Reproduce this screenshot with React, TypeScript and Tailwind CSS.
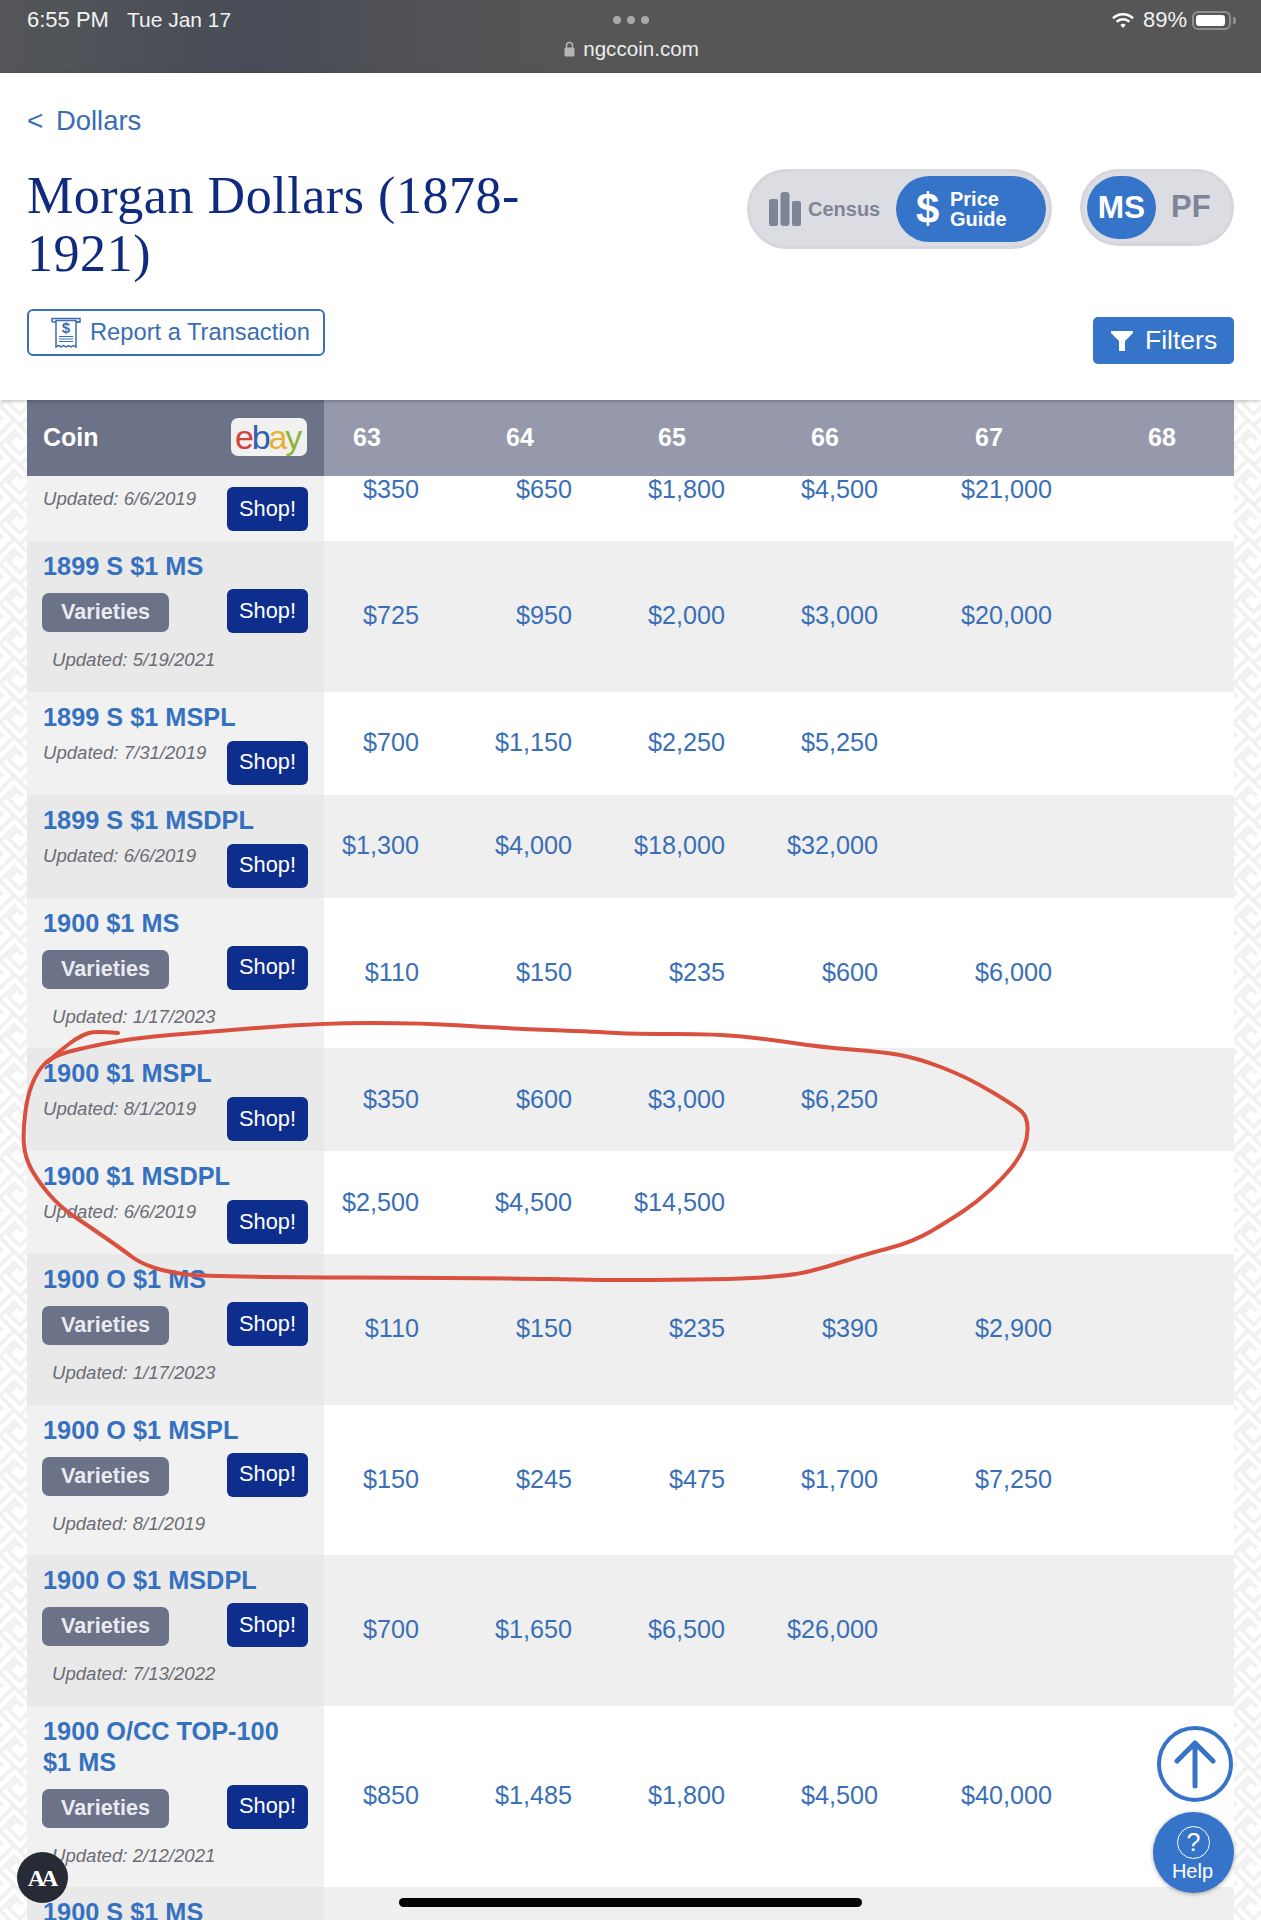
import React from "react";

type Row = {
  title: React.ReactNode;
  updated?: string;
  varieties?: boolean;
  prices: string[];
};

const rows: Row[] = [
  { title: "", updated: "6/6/2019", prices: ["$350", "$650", "$1,800", "$4,500", "$21,000"] },
  { title: "1899 S $1 MS", updated: "5/19/2021", varieties: true, prices: ["$725", "$950", "$2,000", "$3,000", "$20,000"] },
  { title: "1899 S $1 MSPL", updated: "7/31/2019", prices: ["$700", "$1,150", "$2,250", "$5,250"] },
  { title: "1899 S $1 MSDPL", updated: "6/6/2019", prices: ["$1,300", "$4,000", "$18,000", "$32,000"] },
  { title: "1900 $1 MS", updated: "1/17/2023", varieties: true, prices: ["$110", "$150", "$235", "$600", "$6,000"] },
  { title: "1900 $1 MSPL", updated: "8/1/2019", prices: ["$350", "$600", "$3,000", "$6,250"] },
  { title: "1900 $1 MSDPL", updated: "6/6/2019", prices: ["$2,500", "$4,500", "$14,500"] },
  { title: "1900 O $1 MS", updated: "1/17/2023", varieties: true, prices: ["$110", "$150", "$235", "$390", "$2,900"] },
  { title: "1900 O $1 MSPL", updated: "8/1/2019", varieties: true, prices: ["$150", "$245", "$475", "$1,700", "$7,250"] },
  { title: "1900 O $1 MSDPL", updated: "7/13/2022", varieties: true, prices: ["$700", "$1,650", "$6,500", "$26,000"] },
  { title: <>1900 O/CC TOP-100<br />$1 MS</>, updated: "2/12/2021", varieties: true, prices: ["$850", "$1,485", "$1,800", "$4,500", "$40,000"] },
  { title: "1900 S $1 MS", prices: [] },
];

const gridCols = "grid grid-cols-[297px_153px_153px_153px_153px_174px_124px]";

function Shop() {
  return (
    <div className="w-[81px] h-[44px] shrink-0 flex items-center justify-center rounded-[6px] bg-[#0e2e8e] text-white text-[21.8px]">
      Shop!
    </div>
  );
}

function CoinCell({ row, odd }: { row: Row; odd: boolean }) {
  return (
    <div className={`pr-[16px] pt-[10px] ${odd ? "bg-[#e9e9e9]" : "bg-[#f1f1f1]"}`}>
      <div className="pl-[16px] min-h-[31px] text-[25.3px] leading-[31px] font-bold text-[#3571bf]">{row.title}</div>
      {row.updated === undefined ? null : row.varieties ? (
        <>
          <div className="flex justify-between items-start mt-[7px] pl-[15px]">
            <div className="mt-[4px] w-[127px] h-[39px] flex items-center justify-center rounded-[7px] bg-[#6c7288] text-[#e9ebf1] font-bold text-[21.6px]">
              Varieties
            </div>
            <Shop />
          </div>
          <div className="mt-[16px] pl-[25px] pb-[20.5px] leading-[22px] text-[18.6px] italic text-[#6a6d75]">
            Updated: {row.updated}
          </div>
        </>
      ) : (
        <div className="flex justify-between items-start pl-[16px] pb-[10px]">
          <div className="mt-[9px] leading-[22px] text-[18.6px] italic text-[#6a6d75]">Updated: {row.updated}</div>
          <div className="mt-[8px]">
            <Shop />
          </div>
        </div>
      )}
    </div>
  );
}

function TableRow({ row, odd }: { row: Row; odd: boolean }) {
  const cells = [0, 1, 2, 3, 4];
  return (
    <div className={`${gridCols} ${odd ? "bg-[#efefef]" : "bg-white"}`}>
      <CoinCell row={row} odd={odd} />
      {cells.map((i) => (
        <div key={i} className="flex items-center justify-end pr-[58px] text-[25.2px] text-[#3a6fb7]">
          {row.prices[i] ?? ""}
        </div>
      ))}
      <div />
    </div>
  );
}

function Maze({ id }: { id: string }) {
  return (
    <svg className="w-full h-full block" aria-hidden="true">
      <defs>
        <pattern id={id} width="28" height="28" patternUnits="userSpaceOnUse" patternTransform="rotate(45)">
          <rect width="28" height="28" fill="#ffffff" />
          <path d="M0 4H24V24H8V12H16M24 4H28M4 28V10M4 0V4" fill="none" stroke="#f0f0f0" strokeWidth="3.4" />
        </pattern>
      </defs>
      <rect width="100%" height="100%" fill={`url(#${id})`} />
    </svg>
  );
}

function smooth(p: number[][]) {
  let d = `M${p[0][0]} ${p[0][1]}`;
  for (let i = 1; i < p.length - 1; i++) {
    const mx = (p[i][0] + p[i + 1][0]) / 2;
    const my = (p[i][1] + p[i + 1][1]) / 2;
    d += ` Q${p[i][0]} ${p[i][1]} ${mx} ${my}`;
  }
  const l = p[p.length - 1];
  return d + ` L${l[0]} ${l[1]}`;
}

const tail = [
  [118, 1033], [95, 1031], [80, 1036], [62, 1049], [48, 1062],
];
const main = [
  [600, 1280], [713, 1280], [790, 1276], [827, 1267], [863, 1255], [913, 1242], [950, 1220], [977, 1202],
  [1003, 1178], [1020, 1157], [1028, 1137], [1027, 1117], [1017, 1107], [967, 1077], [917, 1058], [883, 1052],
  [820, 1047], [767, 1039], [717, 1034], [633, 1034], [600, 1032], [500, 1028], [423, 1023], [320, 1023],
  [207, 1032], [133, 1038], [73, 1050], [50, 1058], [37, 1072], [27, 1097], [23, 1133], [25, 1157],
  [37, 1180], [60, 1207], [90, 1227], [123, 1250], [140, 1263], [167, 1272], [207, 1277], [500, 1278], [600, 1280],
];

export default function App() {
  return (
    <div className="relative w-[1261px] h-[1920px] overflow-hidden flex flex-col bg-white font-['Liberation_Sans',Arial,sans-serif]">
      {/* Status bar */}
      <div className="h-[73px] shrink-0 pl-[27px] pr-[25px] grid grid-cols-[1fr_auto_1fr] bg-[linear-gradient(90deg,#545658_0%,#474c57_20%,#4f5156_30%,#565656_45%,#565656_100%)] text-white">
        <div className="flex gap-[18px] pt-[7px] leading-[26px] text-[#f2f2f2]">
          <span className="text-[22px]">6:55 PM</span>
          <span className="text-[21px]">Tue Jan 17</span>
        </div>
        <div className="flex flex-col items-center pt-[16px]">
          <div className="flex gap-[6px] h-[8px]">
            <span className="w-[8px] h-[8px] rounded-full bg-[#a9a9a9]" />
            <span className="w-[8px] h-[8px] rounded-full bg-[#a9a9a9]" />
            <span className="w-[8px] h-[8px] rounded-full bg-[#a9a9a9]" />
          </div>
          <div className="flex items-center gap-[8px] mt-[12px] leading-[26px] text-[20.6px] text-[#ececec]">
            <svg width="11" height="16" viewBox="0 0 11 16" aria-hidden="true">
              <path d="M2.5 7V4.5a3 3 0 0 1 6 0V7" fill="none" stroke="#b5b5b8" strokeWidth="1.5" />
              <rect x="0.5" y="6.5" width="10" height="9" rx="1.5" fill="#b5b5b8" />
            </svg>
            <span>ngccoin.com</span>
          </div>
        </div>
        <div className="flex items-start justify-end pt-[7px]">
          <svg width="24" height="17" viewBox="0 0 23 17" className="mt-[5px] mr-[8px]" aria-hidden="true">
            <path d="M1.5 6.2a14.5 14.5 0 0 1 20 0" fill="none" stroke="#fff" strokeWidth="2.6" />
            <path d="M5.2 9.8a9.2 9.2 0 0 1 12.6 0" fill="none" stroke="#fff" strokeWidth="2.6" />
            <path d="M8.8 13a4 4 0 0 1 5.4 0L11.5 16z" fill="#fff" />
          </svg>
          <span className="text-[22px] leading-[26px] text-[#f2f2f2]">89%</span>
          <div className="flex items-center ml-[5px] mt-[4px]">
            <div className="w-[39px] h-[19px] rounded-[6px] border-2 border-[#8f8f8f] p-[2px]">
              <div className="w-[29px] h-full rounded-[3px] bg-white" />
            </div>
            <span className="w-[3px] h-[7px] rounded-r-[2px] bg-[#8f8f8f] ml-[2px]" />
          </div>
        </div>
      </div>

      {/* Page header */}
      <div className="relative z-10 h-[327px] shrink-0 bg-white shadow-[0_1px_4px_rgba(0,0,0,0.25)] pl-[27px] pr-[27px] flex justify-between">
        <div>
          <div className="flex items-center mt-[32px] h-[32px] text-[27.4px] text-[#3a6db4]">
            <span className="w-[29px] text-[28px]">&lt;</span>
            <span>Dollars</span>
          </div>
          <div className="mt-[30px] font-['Liberation_Serif',serif] text-[52px] leading-[58px] tracking-[0.55px] text-[#0e2b80]">
            Morgan Dollars (1878-
            <br />
            1921)
          </div>
          <div className="mt-[26px] w-[298px] h-[47px] flex items-center rounded-[6px] border-2 border-[#3a70b8] text-[23.7px] text-[#3a6db4]">
            <svg width="30" height="32" viewBox="0 0 30 32" className="ml-[22px] mr-[9px]" fill="none" stroke="#3a6db4" strokeWidth="1.5" aria-hidden="true">
              <path d="M1 5V1.5H29V5H25" />
              <path d="M1 5H5M25 5H29" />
              <path d="M5 3.5H25V30L22.5 28.5L20 30L17.5 28.5L15 30L12.5 28.5L10 30L7.5 28.5L5 30Z" />
              <path d="M8 22H22M8 24.5H22M8 19.5H22" strokeWidth="1.2" />
              <text x="15" y="16" textAnchor="middle" fontSize="15" fontWeight="700" fill="#3a6db4" stroke="none">$</text>
            </svg>
            <span>Report a Transaction</span>
          </div>
        </div>

        <div className="flex flex-col items-end">
          <div className="flex items-start mt-[96px] gap-[28px]">
            <div className="w-[305px] h-[80px] rounded-full bg-[#dcdde2] border-[3px] border-[#d6d7dc] flex items-center justify-between pl-[19px] pr-[3px]">
              <div className="flex items-center gap-[7px]">
                <svg width="32" height="34" viewBox="0 0 32 34" aria-hidden="true">
                  <rect x="0" y="7" width="9" height="27" rx="2" fill="#7f8599" />
                  <rect x="11.5" y="0" width="9" height="34" rx="3" fill="#7f8599" />
                  <rect x="23" y="9" width="9" height="25" rx="2" fill="#7f8599" />
                </svg>
                <span className="text-[20px] font-bold text-[#7f8599]">Census</span>
              </div>
              <div className="w-[150px] h-[66px] rounded-full bg-[#3674c9] flex items-center pl-[20px] text-white font-bold">
                <span className="w-[34px] text-[42px] leading-none">$</span>
                <span className="text-[20px] leading-[20px]">
                  Price
                  <br />
                  Guide
                </span>
              </div>
            </div>
            <div className="w-[154px] h-[77px] rounded-full bg-[#dcdde2] border-[3px] border-[#d6d7dc] flex items-center pl-[4px]">
              <div className="w-[69px] h-[63px] rounded-full bg-[#3674c9] text-white font-bold text-[31.6px] flex items-center justify-center">
                MS
              </div>
              <span className="ml-[15px] font-bold text-[31px] text-[#7f8599]">PF</span>
            </div>
          </div>
          <div className="mt-[68px] w-[141px] h-[47px] rounded-[5px] bg-[#3674c9] text-white text-[26.5px] flex items-center pl-[18px] gap-[12px]">
            <svg width="22" height="20" viewBox="0 0 22 20" aria-hidden="true">
              <path d="M0 0H22V2L14 10V20H8V10L0 2Z" fill="#fff" />
            </svg>
            <span>Filters</span>
          </div>
        </div>
      </div>

      {/* Table region */}
      <div className="flex-1 min-h-0 flex">
        <div className="w-[27px] shrink-0">
          <Maze id="mazeL" />
        </div>
        <div className="w-[1207px] shrink-0 flex flex-col min-h-0">
          <div className={`${gridCols} h-[76px] shrink-0 bg-[#9599ab] text-white font-bold text-[25px]`}>
            <div className="bg-[#6c7288] pl-[16px] pr-[17px] flex items-center justify-between">
              <span>Coin</span>
              <span className="w-[76px] h-[38px] -mt-[3px] rounded-[7px] bg-[#f1f1f1] flex items-center justify-center font-normal text-[34px] tracking-[-2.2px] leading-none pr-[3px]">
                <span className="text-[#d9403a]">e</span>
                <span className="text-[#2f5fb0]">b</span>
                <span className="text-[#e8b02e]">a</span>
                <span className="text-[#8cb63c]">y</span>
              </span>
            </div>
            <div className="pl-[29px] flex items-center">63</div>
            <div className="pl-[29px] flex items-center">64</div>
            <div className="pl-[28px] flex items-center">65</div>
            <div className="pl-[28px] flex items-center">66</div>
            <div className="pl-[39px] flex items-center">67</div>
            <div className="pl-[38px] flex items-center">68</div>
          </div>
          <div className="flex-1 min-h-0 overflow-hidden">
            <div className="-mt-[38px]">
              {rows.map((r, i) => (
                <TableRow key={i} row={r} odd={i % 2 === 1} />
              ))}
            </div>
          </div>
        </div>
        <div className="w-[27px] shrink-0">
          <Maze id="mazeR" />
        </div>
      </div>

      {/* Hand-drawn annotation */}
      <svg className="absolute left-0 top-0 z-20 pointer-events-none" width="1261" height="1920" fill="none" stroke="#d9503f" strokeWidth="4" strokeLinecap="round" strokeLinejoin="round" aria-hidden="true">
        <path d={smooth(tail)} />
        <path d={smooth(main)} />
      </svg>

      {/* Floating controls */}
      <div className="absolute z-30 left-[17px] top-[1852px] w-[51px] h-[51px] rounded-full bg-[#262b36] flex items-center justify-center font-['Liberation_Serif',serif] font-bold text-white text-[24px] tracking-[-4px] pr-[3px]">
        AA
      </div>
      <svg className="absolute z-30 left-[1157px] top-[1726px]" width="76" height="76" viewBox="0 0 76 76" fill="none" stroke="#3674c9" strokeLinecap="round" strokeLinejoin="round" aria-hidden="true">
        <circle cx="38" cy="38" r="36" strokeWidth="4" />
        <path d="M38 60V18M20 35L38 17L56 35" strokeWidth="5" />
      </svg>
      <div className="absolute z-30 left-[1153px] top-[1812px] w-[81px] h-[81px] rounded-full bg-[#3674c9] shadow-[0_1px_4px_rgba(0,0,0,0.35)] flex flex-col items-center text-white text-[20px] pt-[14px]">
        <span className="w-[33px] h-[33px] rounded-full border-[1.5px] border-white flex items-center justify-center text-[25px] leading-none">?</span>
        <span className="leading-[24px] -ml-[2px]">Help</span>
      </div>
      <div className="absolute z-30 left-[399px] top-[1898px] w-[463px] h-[9px] rounded-full bg-black" />
    </div>
  );
}
